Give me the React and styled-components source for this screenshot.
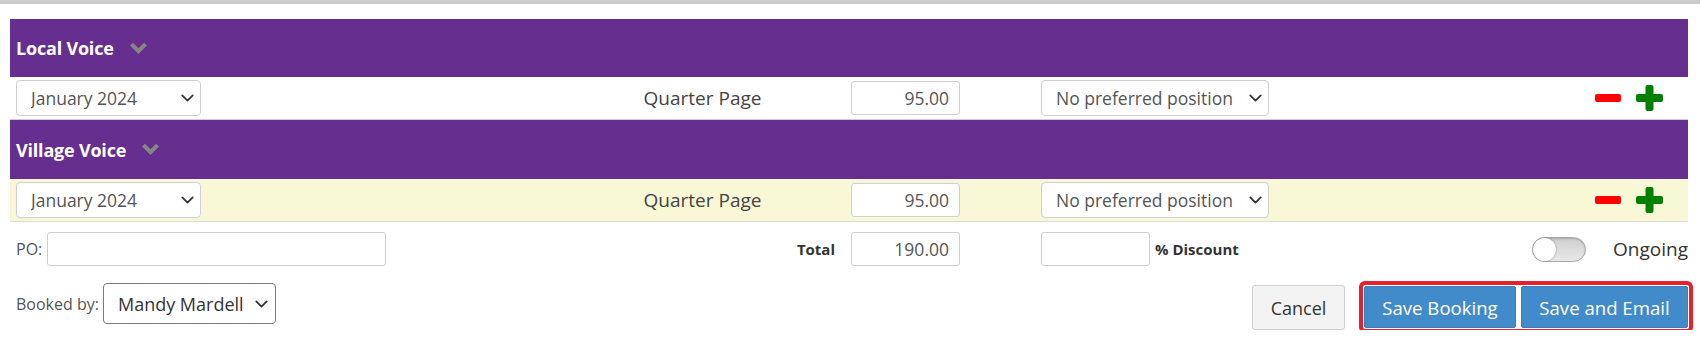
import React from "react";
import styled, { createGlobalStyle } from "styled-components";
import { ChevronDown } from "lucide-react";

const GlobalStyle = createGlobalStyle`
  html, body { margin: 0; padding: 0; background: #fff; }
  body { font-family: "Open Sans", "Liberation Sans", sans-serif; color: #333; }
  * { box-sizing: border-box; }
`;

const Page = styled.div`
  border-top: 4px solid #cbcbcb;
  padding: 15px 12px 0 10px;
  width: 1700px;
`;

const GroupHeader = styled.div`
  height: ${(p) => (p.$first ? 58 : 59)}px;
  background: #662e8e;
  display: flex;
  align-items: center;
  gap: 15px;
  padding-left: 6px;
  color: #fff;
  font-size: 18px;
  font-weight: 700;
  letter-spacing: -0.2px;
`;

const RowGrid = styled.div`
  display: grid;
  grid-template-columns: 538px 297px 190px 1fr auto;
  align-items: center;
  height: 43px;
  padding: 0 25px 0 6px;
  background: ${(p) => (p.$alt ? "#f8f8d6" : "#fff")};
  border-bottom: 1px solid ${(p) => (p.$alt ? "#dcdcd0" : "#d6c9e3")};
`;

const SelectWrap = styled.div`
  position: relative;
  width: ${(p) => p.$w}px;
  height: ${(p) => p.$h || 36}px;
`;

const Select = styled.select`
  appearance: none;
  -webkit-appearance: none;
  width: 100%;
  height: 100%;
  border: 1px solid ${(p) => (p.$dark ? "#7a7a7a" : "#d0d0d0")};
  border-radius: 4px;
  background: #fff;
  font-family: "Open Sans", "Liberation Sans", sans-serif;
  font-size: ${(p) => p.$fs || 17.5}px;
  color: ${(p) => (p.$dark ? "#333" : "#555")};
  padding: 0 20px 0 ${(p) => p.$pl || 14}px;
  outline: none;
`;

const Arrow = styled.span`
  position: absolute;
  right: ${(p) => p.$r || 3}px;
  top: 50%;
  transform: translateY(-50%);
  display: flex;
  color: #333;
  pointer-events: none;
`;

const CenterText = styled.div`
  text-align: center;
  font-size: 19px;
  color: #444;
`;

const NumInput = styled.input`
  width: ${(p) => p.$w || 109}px;
  height: ${(p) => p.$h || 34}px;
  border: 1px solid #d0d0d0;
  border-radius: 3px;
  background: #fff;
  font-family: "Open Sans", "Liberation Sans", sans-serif;
  font-size: 17.5px;
  color: #555;
  text-align: right;
  padding: 0 10px;
  outline: none;
`;

const Actions = styled.div`
  display: flex;
  align-items: center;
  gap: 15px;
`;

const FooterGrid = styled.div`
  display: grid;
  grid-template-columns: 538px 297px 190px 1fr;
  align-items: center;
  margin-top: 10px;
  padding-left: 6px;
  height: 34px;
`;

const Inline = styled.div`
  display: flex;
  align-items: center;
  gap: ${(p) => p.$gap || 6}px;
`;

const Label = styled.span`
  font-size: 16px;
  color: #555;
`;

const BoldLabel = styled.span`
  font-size: 15px;
  font-weight: 700;
  color: #333;
  text-align: right;
  padding-right: ${(p) => (p.$flush ? 0 : 16)}px;
`;

const TextInput = styled.input`
  width: ${(p) => p.$w}px;
  height: 34px;
  border: 1px solid #d0d0d0;
  border-radius: 3px;
  background: #fff;
  outline: none;
`;

const DiscountCell = styled.div`
  display: flex;
  align-items: center;
  justify-content: space-between;
`;

const Toggle = styled.div`
  width: 54px;
  height: 25px;
  border-radius: 13px;
  border: 1px solid #a9a9a9;
  background: linear-gradient(#cfcfcf, #e8e8e8);
  position: relative;
  box-shadow: inset 0 1px 2px rgba(0, 0, 0, 0.2);
`;

const Knob = styled.div`
  position: absolute;
  left: 0;
  top: 0;
  width: 23px;
  height: 23px;
  border-radius: 50%;
  background: #fff;
  box-shadow: 0 0 2px rgba(0, 0, 0, 0.4);
`;

const OngoingText = styled.span`
  font-size: 19px;
  color: #333;
`;

const BottomRow = styled.div`
  display: flex;
  justify-content: space-between;
  align-items: flex-start;
  margin-top: 17px;
  padding-left: 6px;
`;

const ButtonArea = styled.div`
  display: flex;
  align-items: flex-start;
  gap: 19px;
  padding-top: 2px;
`;

const CancelButton = styled.button`
  height: 45px;
  width: 93px;
  border: 1px solid #cfcfcf;
  border-radius: 3px;
  background: #f3f3f3;
  color: #333;
  font-family: "Open Sans", "Liberation Sans", sans-serif;
  font-size: 18px;
`;

const SaveGroup = styled.div`
  display: flex;
  gap: 5px;
  margin-top: 1px;
  outline: 4px solid #e3222b;
  outline-offset: 1px;
  border-radius: 1px;
`;

const PrimaryButton = styled.button`
  height: 42px;
  width: ${(p) => p.$w}px;
  border: 1px solid #3a7fbd;
  border-radius: 2px;
  background: #428bca;
  color: #fff;
  font-family: "Open Sans", "Liberation Sans", sans-serif;
  font-size: 18.6px;
`;

const HeaderChevron = () => (
  <svg width="19" height="13" viewBox="0 0 19 13">
    <path d="M1 3.5 L4 0.8 L9.5 6.3 L15 0.8 L18 3.5 L9.5 12 Z" fill="#858585" />
  </svg>
);

const MinusIcon = () => (
  <svg width="26" height="8" viewBox="0 0 26 8">
    <rect x="0" y="0" width="26" height="8" rx="2" fill="#ff0000" />
  </svg>
);

const PlusIcon = () => (
  <svg width="27" height="26" viewBox="0 0 27 26">
    <rect x="0" y="9" width="27" height="8" rx="2" fill="#008000" />
    <rect x="9.5" y="0" width="8" height="26" rx="2" fill="#008000" />
  </svg>
);

const StyledSelect = ({ w, h, value, options, dark, fs, pl, r }) => (
  <SelectWrap $w={w} $h={h}>
    <Select $dark={dark} $fs={fs} $pl={pl} defaultValue={value}>
      {options.map((o) => (
        <option key={o}>{o}</option>
      ))}
    </Select>
    <Arrow $r={r}>
      <ChevronDown size={21} strokeWidth={2} />
    </Arrow>
  </SelectWrap>
);

const BookingRow = ({ alt }) => (
  <RowGrid $alt={alt}>
    <StyledSelect w={185} value="January 2024" options={["January 2024", "February 2024"]} />
    <CenterText>Quarter Page</CenterText>
    <NumInput defaultValue="95.00" />
    <StyledSelect w={228} value="No preferred position" options={["No preferred position"]} />
    <Actions>
      <MinusIcon />
      <PlusIcon />
    </Actions>
  </RowGrid>
);

const groups = [{ name: "Local Voice" }, { name: "Village Voice" }];

export default function App() {
  return (
    <Page>
      <GlobalStyle />
      {groups.map((g, i) => (
        <React.Fragment key={g.name}>
          <GroupHeader $first={i === 0}>
            <span>{g.name}</span>
            <HeaderChevron />
          </GroupHeader>
          <BookingRow alt={i === 1} />
        </React.Fragment>
      ))}
      <FooterGrid>
        <Inline $gap={5}>
          <Label>PO:</Label>
          <TextInput $w={339} />
        </Inline>
        <BoldLabel>Total</BoldLabel>
        <NumInput defaultValue="190.00" />
        <DiscountCell>
          <Inline $gap={5}>
            <TextInput $w={109} />
            <BoldLabel $flush>% Discount</BoldLabel>
          </Inline>
          <Inline $gap={27}>
            <Toggle>
              <Knob />
            </Toggle>
            <OngoingText>Ongoing</OngoingText>
          </Inline>
        </DiscountCell>
      </FooterGrid>
      <BottomRow>
        <Inline $gap={4}>
          <Label>Booked by:</Label>
          <StyledSelect
            w={173}
            h={41}
            dark
            fs={18}
            value="Mandy Mardell"
            options={["Mandy Mardell"]}
            r={4}
          />
        </Inline>
        <ButtonArea>
          <CancelButton>Cancel</CancelButton>
          <SaveGroup>
            <PrimaryButton $w={152}>Save Booking</PrimaryButton>
            <PrimaryButton $w={167}>Save and Email</PrimaryButton>
          </SaveGroup>
        </ButtonArea>
      </BottomRow>
    </Page>
  );
}
